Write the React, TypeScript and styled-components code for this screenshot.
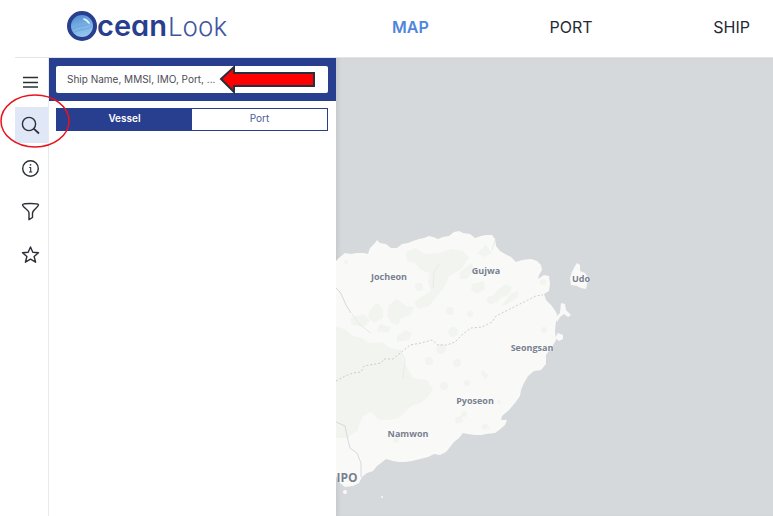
import React from "react";
import styled, { createGlobalStyle } from "styled-components";

const navy = "#283e8f";
const ink = "#2b2f36";

const GlobalStyle = createGlobalStyle`
  * { box-sizing: border-box; }
  html, body, #root { height: 100%; }
  body { margin: 0; background: #fff; font-family: Inter, "Liberation Sans", sans-serif; overflow: hidden; }
  button, input { font: inherit; }
`;

const Page = styled.div`
  position: relative;
  display: flex;
  flex-direction: column;
  min-height: 100vh;
  padding-left: 15px;
`;

const Header = styled.header`
  display: flex;
  align-items: center;
  height: 58px;
  padding: 0 23px 4px 52px;
  border-bottom: 1px solid #e3e4e6;
`;

const Brand = styled.a`
  display: flex;
  align-items: baseline;
  flex: none;
  width: 325px;
  color: ${navy};
  text-decoration: none;
  svg { display: block; flex: none; align-self: center; }
`;

const Word = styled.span<{ $light?: boolean }>`
  padding-left: ${(p) => (p.$light ? 1 : 0)}px;
  color: ${(p) => (p.$light ? "#3f56a0" : navy)};
  font-feature-settings: "cv11";
  font-size: ${(p) => (p.$light ? 26 : 29)}px;
  font-weight: ${(p) => (p.$light ? 300 : 600)};
  line-height: 32px;
`;

const Nav = styled.nav`
  display: flex;
  flex: 1;
  justify-content: space-between;
`;

const NavLink = styled.a<{ $active?: boolean }>`
  color: ${(p) => (p.$active ? "#4f86dc" : "#252a34")};
  font-size: 16px;
  font-weight: ${(p) => (p.$active ? 600 : 400)};
  line-height: 20px;
  text-decoration: none;
`;

const Main = styled.main`
  display: flex;
  flex: 1;
`;

const Rail = styled.nav`
  display: flex;
  flex-direction: column;
  flex: none;
  gap: 7px;
  width: 34px;
  padding-top: 6px;
  border-right: 1px solid #e8e9eb;
`;

const RailButton = styled.button<{ $active?: boolean }>`
  display: grid;
  place-items: center;
  height: 36px;
  padding: 0 2px 0 0;
  border: 0;
  background: ${(p) => (p.$active ? "#e0e7f7" : "transparent")};
  svg { display: block; }
`;

const Panel = styled.section`
  flex: none;
  width: 287px;
`;

const SearchBar = styled.form`
  display: flex;
  height: 43px;
  padding: 8px 8px 8px 7px;
  background: ${navy};
`;

const SearchInput = styled.input`
  flex: 1;
  min-width: 0;
  padding: 0 11px 2px;
  border: 0;
  border-radius: 2px;
  background: #fff;
  font-size: 10px;
  color: #4c4d55;
  &::placeholder { color: #4c4d55; opacity: 1; }
`;

const Tabs = styled.div`
  display: grid;
  grid-template-columns: 1fr 1fr;
  margin: 7px 8px 0 7px;
  border: 1px solid ${navy};
`;

const Tab = styled.button<{ $active?: boolean }>`
  height: 21px;
  padding: 0 0 2px;
  border: 0;
  background: ${(p) => (p.$active ? navy : "#fff")};
  color: ${(p) => (p.$active ? "#fff" : "#4a5a99")};
  font-size: 10px;
  font-weight: ${(p) => (p.$active ? 600 : 400)};
  line-height: 19px;
`;

const MapArea = styled.section`
  position: relative;
  flex: 1;
  overflow: hidden;
  background: #d5d9dc;
  box-shadow: inset 4px 0 4px -2px rgba(0, 0, 0, 0.08);
`;

const Land = styled.svg`
  position: absolute;
  top: 0;
  left: 0;
`;

const PlaceName = styled.span<{ $x: number; $y: number; $city?: boolean }>`
  position: absolute;
  left: ${(p) => p.$x}px;
  top: ${(p) => p.$y}px;
  transform: translate(-50%, -50%);
  color: #78808f;
  font-family: "Open Sans", sans-serif;
  font-size: ${(p) => (p.$city ? 12 : 9)}px;
  font-weight: 700;
  line-height: 14px;
  text-shadow: 0 0 2px #fff;
`;

const Callout = styled.svg`
  position: absolute;
  top: 0;
  left: 0;
  pointer-events: none;
`;

const LogoMark = () => (
  <svg width="30" height="32" viewBox="0 0 30 32" aria-hidden="true">
    <defs>
      <linearGradient id="lens" x1="0.3" y1="0" x2="0.6" y2="1">
        <stop offset="0" stopColor="#4f86cf" />
        <stop offset="0.5" stopColor="#79b1e5" />
        <stop offset="1" stopColor="#9ccbf0" />
      </linearGradient>
    </defs>
    <circle cx="15" cy="15" r="13" fill="url(#lens)" stroke={navy} strokeWidth="4" />
    <path d="M5 19 C11 13 18 17 24 11 M6 22 C14 17 19 20 25 15" stroke="#6ca5de" strokeWidth="1" fill="none" />
    <path d="M17 8 Q20 9 22 12" stroke="#e9f5ff" strokeWidth="1.6" fill="none" strokeLinecap="round" />
  </svg>
);

const icons = {
  menu: <path d="M2 4.5H17M2 9.5H17M2 14H17" strokeWidth="1.5" />,
  search: (
    <>
      <circle cx="8" cy="8" r="6.6" />
      <path d="M12.7 12.7 18 17.5" strokeWidth="1.7" />
    </>
  ),
  info: (
    <>
      <circle cx="9.5" cy="9.5" r="7.8" />
      <path d="M8.2 8.5H9.7V13M8 13H11.2" strokeWidth="1.1" />
      <path d="M9.5 5.2V6.6" strokeWidth="1.5" />
    </>
  ),
  filter: <path d="M1.5 2.7C1.5 1 17.5 1 17.5 2.7C17.5 5.2 11.5 8 11.5 11V15.5L8 17.7V11C8 8 1.5 5.2 1.5 2.7Z" />,
  star: <path d="M9.5 2 11.8 7.3 17.5 7.8 13.1 11.5 14.6 17.2 9.5 14.2 4.4 17.2 5.9 11.5 1.5 7.8 7.2 7.3Z" />,
};

const railItems: { name: keyof typeof icons; label: string }[] = [
  { name: "menu", label: "Menu" },
  { name: "search", label: "Search" },
  { name: "info", label: "Information" },
  { name: "filter", label: "Filter" },
  { name: "star", label: "Favourites" },
];

const places = [
  { name: "Jocheon", x: 53, y: 219 },
  { name: "Gujwa", x: 150, y: 213 },
  { name: "Udo", x: 245, y: 221 },
  { name: "Seongsan", x: 196, y: 290 },
  { name: "Pyoseon", x: 139, y: 343 },
  { name: "Namwon", x: 72, y: 376 },
  { name: "IPO", x: 11, y: 420, city: true },
];

const Island = () => (
  <Land width="437" height="458" viewBox="336 58 437 458" aria-hidden="true">
    <g fill="#f9faf8">
      <path d="M336 261 L340 257 345 253 351 254 357 253 363 253 368 254 370 248 375 243 377 240 380 243 386 244 391 248 397 248 402 244 408 243 413 241 419 239 424 238 429 236 433 237 438 239 443 237 449 236 454 232 459 231 463 233 470 234 475 238 481 236 486 235 492 235 495 239 496 246 500 251 505 254 511 257 516 262 522 260 531 259 537 261 541 265 542 270 539 275 538 279 544 275 549 276 550 284 549 291 544 294 546 300 551 305 554 309 557 314 556 321 555 331 556 340 552 347 546 355 546 364 541 370 534 371 528 376 524 383 521 390 520 396 515 403 509 410 502 416 501 420 507 420 505 425 499 430 495 433 486 434 481 435 475 435 468 434 463 433 459 438 454 442 450 447 446 452 440 455 434 454 428 457 420 459 412 461 405 462 399 462 393 461 386 459 381 463 377 466 373 471 367 473 362 477 359 483 353 486 345 487 340 483 336 476Z" />
      <path d="M575 266 577 263 580 265 580 271 585 273 588 278 587 284 586 289 581 288 577 286 571 285 570 278 572 272Z" />
      <path d="M561 303 565 304 566 310 571 315 568 317 564 314 560 317 557 322 555 318 560 313Z" />
      <path d="M558 333 563 335 563 339 559 341 555 338Z" />
      <circle cx="345" cy="492" r="2" />
      <circle cx="382" cy="497" r="1" />
    </g>
    <g fill="#f2f4f0">
      <path d="M336 326 L346 330 353 336 362 338 369 343 382 342 390 348 400 350 403 360 409 371 413 378 427 380 433 390 428 397 420 403 411 406 405 412 399 418 389 420 379 420 371 412 363 416 357 431 347 438 336 438Z" />
      <path d="M406 252 L415 248 425 254 439 253 451 249 463 251 469 258 460 270 449 276 445 286 438 295 429 306 418 309 414 302 423 296 431 291 428 282 430 273 421 270 415 263 407 261Z" />
      <path d="M389 305 L397 299 406 306 414 307 411 315 401 318 398 325 391 323 387 315Z M397 336 406 330 412 333 409 340 397 342Z M370 310 377 303 383 310 383 318 374 323 368 317Z M350 318 364 314 370 320 364 327 352 325Z M380 324 391 327 388 333 377 331Z" />
      <path d="M497 290 506 284 512 287 509 294 501 298 496 303 491 300Z M511 294 519 290 518 297 508 304 501 306Z M472 284 484 281 485 289 477 294 471 290Z M460 272 471 263 475 269 467 279 460 279Z M477 253 486 245 492 253 484 257Z" />
      <path d="M400 389 412 382 423 387 421 397 410 406 400 403Z M481 426 486 423 490 428 483 430Z M455 418 462 415 463 422 456 424Z M482 370 488 375 486 380 481 374Z" />
      <circle cx="419" cy="287" r="4" /><circle cx="450" cy="311" r="4" />
      <circle cx="453" cy="332" r="5" /><circle cx="441" cy="349" r="5" />
      <circle cx="429" cy="361" r="4" /><circle cx="457" cy="363" r="4" />
      <circle cx="470" cy="314" r="3" /><circle cx="491" cy="300" r="4" />
      <circle cx="543" cy="282" r="3" /><circle cx="544" cy="330" r="3" />
      <circle cx="444" cy="386" r="4" /><circle cx="467" cy="383" r="3" />
      <circle cx="464" cy="414" r="3" /><circle cx="499" cy="402" r="2" />
      <circle cx="346" cy="262" r="2" /><circle cx="396" cy="440" r="3" />
    </g>
    <g fill="none" strokeWidth="1">
      <path d="M336 381 L345 376 353 373 361 372 364 366 381 363 384 359 393 359 399 354 410 345 421 343 432 340 438 345 447 345 455 342 463 334 471 328 482 327 492 322 496 316 510 309 522 303 536 296 543 295" stroke="#d3c9cd" strokeDasharray="2 2" />
      <path d="M336 288 L340 292 343 298 346 305 351 313 M336 422 L345 426 348 440 350 448 357 453 361 463 361 477" stroke="#d6d8dd" />
      <path d="M352 314 L360 325 371 333 M400 350 405 360 403 378 M433 288 434 272 440 263 M495 240 492 250" stroke="#e8ebe8" />
    </g>
  </Land>
);

export default function App() {
  return (
    <>
      <GlobalStyle />
      <Page>
        <Header>
          <Brand href="#" aria-label="OceanLook">
            <LogoMark />
            <Word>cean</Word>
            <Word $light>Look</Word>
          </Brand>
          <Nav aria-label="Main">
            <NavLink href="#map" $active>MAP</NavLink>
            <NavLink href="#port">PORT</NavLink>
            <NavLink href="#ship">SHIP</NavLink>
          </Nav>
        </Header>
        <Main>
          <Rail aria-label="Tools">
            {railItems.map((item) => (
              <RailButton key={item.name} type="button" aria-label={item.label} $active={item.name === "search"}>
                <svg width="19" height="19" viewBox="0 0 19 19" fill="none" stroke={ink} strokeWidth="1.4" strokeLinejoin="round">
                  {icons[item.name]}
                </svg>
              </RailButton>
            ))}
          </Rail>
          <Panel>
            <SearchBar role="search">
              <SearchInput type="text" aria-label="Search" placeholder="Ship Name, MMSI, IMO, Port, ..." />
            </SearchBar>
            <Tabs role="tablist">
              <Tab type="button" role="tab" aria-selected="true" $active>Vessel</Tab>
              <Tab type="button" role="tab" aria-selected="false">Port</Tab>
            </Tabs>
          </Panel>
          <MapArea aria-label="Map">
            <Island />
            {places.map((p) => (
              <PlaceName key={p.name} $x={p.x} $y={p.y} $city={p.city}>{p.name}</PlaceName>
            ))}
          </MapArea>
        </Main>
        <Callout width="340" height="160" viewBox="0 0 340 160" aria-hidden="true">
          <ellipse cx="35" cy="121" rx="34" ry="26" fill="none" stroke="#e8141c" strokeWidth="1.5" />
          <path d="M221 79 L234 67 V73 H314 V86 H234 V92Z" fill="#fe0000" stroke="#26303c" strokeWidth="2" />
        </Callout>
      </Page>
    </>
  );
}
